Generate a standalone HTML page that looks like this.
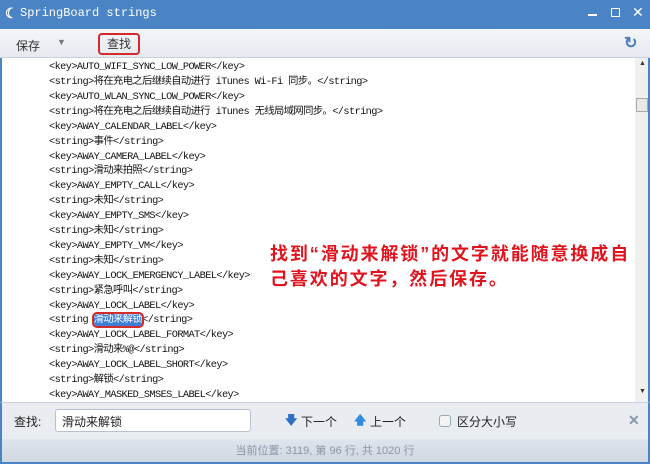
<!DOCTYPE html>
<html><head><meta charset="utf-8"><style>
*{margin:0;padding:0;box-sizing:border-box}
body{width:650px;height:464px;overflow:hidden;font-family:"Liberation Sans","Noto Sans CJK SC",sans-serif;background:#fff;position:relative}
.title{position:absolute;left:0;top:0;width:650px;height:29px;background:#4a84c4;color:#fff;font-size:12px}
.title .t{position:absolute;left:20px;top:6px;font-family:"Liberation Mono","Noto Sans CJK SC",monospace;font-size:12px}
.tool{position:absolute;left:0;top:29px;width:650px;height:29px;background:linear-gradient(#f3f5f8,#e6eaf0);border-bottom:1px solid #c9d2de;font-size:12px;color:#333}
.content{position:absolute;left:0;top:58px;width:635px;height:344px;background:#fff;border-left:2px solid #4a84c4}
.line{position:absolute;left:47px;height:15px;line-height:15px;font-family:"Liberation Mono","Noto Sans CJK SC",monospace;font-size:10.3px;color:#111;white-space:pre;letter-spacing:-0.6px}
.scroll{position:absolute;left:635px;top:58px;width:15px;height:344px;background:#f0f0f0;border-right:2px solid #4a84c4}
.find{position:absolute;left:0;top:402px;width:650px;height:37px;background:#e9edf2;border-top:1px solid #c9d2de;font-size:12px;color:#222;border-left:2px solid #4a84c4;border-right:2px solid #4a84c4}
.status{position:absolute;left:0;top:439px;width:650px;height:25px;background:linear-gradient(#dfe5ec,#cfd7e1);font-size:11px;color:#8a96a6;text-align:center;line-height:24px;border:2px solid #4a84c4;border-top:none}
.red{position:absolute;left:270px;top:242px;font-size:18px;font-weight:bold;color:#e0141e;line-height:25px;width:380px;letter-spacing:1.9px;white-space:nowrap}
</style></head><body>
<div class="title"><span style="position:absolute;left:5px;top:5px;font-size:14px;font-weight:bold">☾</span><span class="t">SpringBoard strings</span>
<span style="position:absolute;left:588px;top:14px;width:9px;height:2px;background:#fff"></span>
<span style="position:absolute;left:611px;top:8px;width:9px;height:9px;border:1px solid #fff"></span>
<span style="position:absolute;left:632px;top:4px;font-size:14px">✕</span></div>
<div class="tool"><span style="position:absolute;left:16px;top:8px">保存</span><span style="position:absolute;left:57px;top:8px;font-size:9px;color:#777">▼</span>
<span style="position:absolute;left:98px;top:4px;width:42px;height:22px;border:2px solid #d42a2a;border-radius:4px;text-align:center;line-height:18px">查找</span>
<span style="position:absolute;left:624px;top:4px;font-size:16px;color:#4a7cc0;font-weight:bold">↻</span></div>
<div class="content">
<div class="line" style="top:2px">&lt;key&gt;AUTO_WIFI_SYNC_LOW_POWER&lt;/key&gt;</div>
<div class="line" style="top:17px">&lt;string&gt;将在充电之后继续自动进行 iTunes Wi-Fi 同步。&lt;/string&gt;</div>
<div class="line" style="top:32px">&lt;key&gt;AUTO_WLAN_SYNC_LOW_POWER&lt;/key&gt;</div>
<div class="line" style="top:47px">&lt;string&gt;将在充电之后继续自动进行 iTunes 无线局域网同步。&lt;/string&gt;</div>
<div class="line" style="top:62px">&lt;key&gt;AWAY_CALENDAR_LABEL&lt;/key&gt;</div>
<div class="line" style="top:77px">&lt;string&gt;事件&lt;/string&gt;</div>
<div class="line" style="top:92px">&lt;key&gt;AWAY_CAMERA_LABEL&lt;/key&gt;</div>
<div class="line" style="top:106px">&lt;string&gt;滑动来拍照&lt;/string&gt;</div>
<div class="line" style="top:121px">&lt;key&gt;AWAY_EMPTY_CALL&lt;/key&gt;</div>
<div class="line" style="top:136px">&lt;string&gt;未知&lt;/string&gt;</div>
<div class="line" style="top:151px">&lt;key&gt;AWAY_EMPTY_SMS&lt;/key&gt;</div>
<div class="line" style="top:166px">&lt;string&gt;未知&lt;/string&gt;</div>
<div class="line" style="top:181px">&lt;key&gt;AWAY_EMPTY_VM&lt;/key&gt;</div>
<div class="line" style="top:196px">&lt;string&gt;未知&lt;/string&gt;</div>
<div class="line" style="top:211px">&lt;key&gt;AWAY_LOCK_EMERGENCY_LABEL&lt;/key&gt;</div>
<div class="line" style="top:226px">&lt;string&gt;紧急呼叫&lt;/string&gt;</div>
<div class="line" style="top:241px">&lt;key&gt;AWAY_LOCK_LABEL&lt;/key&gt;</div>
<div class="line" style="top:255px">&lt;string <span style="background:#3b7fd6;color:#fff;outline:2px solid #d42a2a;border-radius:3px">滑动来解锁</span>&lt;/string&gt;</div>
<div class="line" style="top:270px">&lt;key&gt;AWAY_LOCK_LABEL_FORMAT&lt;/key&gt;</div>
<div class="line" style="top:285px">&lt;string&gt;滑动来%@&lt;/string&gt;</div>
<div class="line" style="top:300px">&lt;key&gt;AWAY_LOCK_LABEL_SHORT&lt;/key&gt;</div>
<div class="line" style="top:315px">&lt;string&gt;解锁&lt;/string&gt;</div>
<div class="line" style="top:330px">&lt;key&gt;AWAY_MASKED_SMSES_LABEL&lt;/key&gt;</div>
</div>
<div class="red">找到“滑动来解锁”的文字就能随意换成自<br>己喜欢的文字，然后保存。</div>
<div class="scroll"><span style="position:absolute;left:4px;top:2px;font-size:7px;color:#333">▲</span>
<div style="position:absolute;left:1px;top:40px;width:12px;height:14px;border:1px solid #aaa;background:#e8e8e8"></div>
<span style="position:absolute;left:4px;top:330px;font-size:7px;color:#333">▼</span></div>
<div class="find"><span style="position:absolute;left:12px;top:10px">查找:</span>
<div style="position:absolute;left:53px;top:6px;width:196px;height:23px;background:#fff;border:1px solid #b8c2cf;border-radius:3px;padding:3px 6px">滑动来解锁</div>
<span style="position:absolute;left:283px;top:8px;color:#2f6fc4;font-weight:bold">🡇</span><span style="position:absolute;left:299px;top:10px">下一个</span>
<span style="position:absolute;left:352px;top:8px;color:#2f8ce0;font-weight:bold">🡅</span><span style="position:absolute;left:368px;top:10px">上一个</span>
<span style="position:absolute;left:437px;top:12px;width:12px;height:12px;border:1px solid #9aa;border-radius:3px;background:#f4f4f4"></span><span style="position:absolute;left:455px;top:10px">区分大小写</span>
<span style="position:absolute;left:626px;top:9px;color:#8a96a6;font-size:14px;font-weight:bold">✕</span></div>
<div class="status">当前位置: 3119, 第 96 行, 共 1020 行</div>
</body></html>
